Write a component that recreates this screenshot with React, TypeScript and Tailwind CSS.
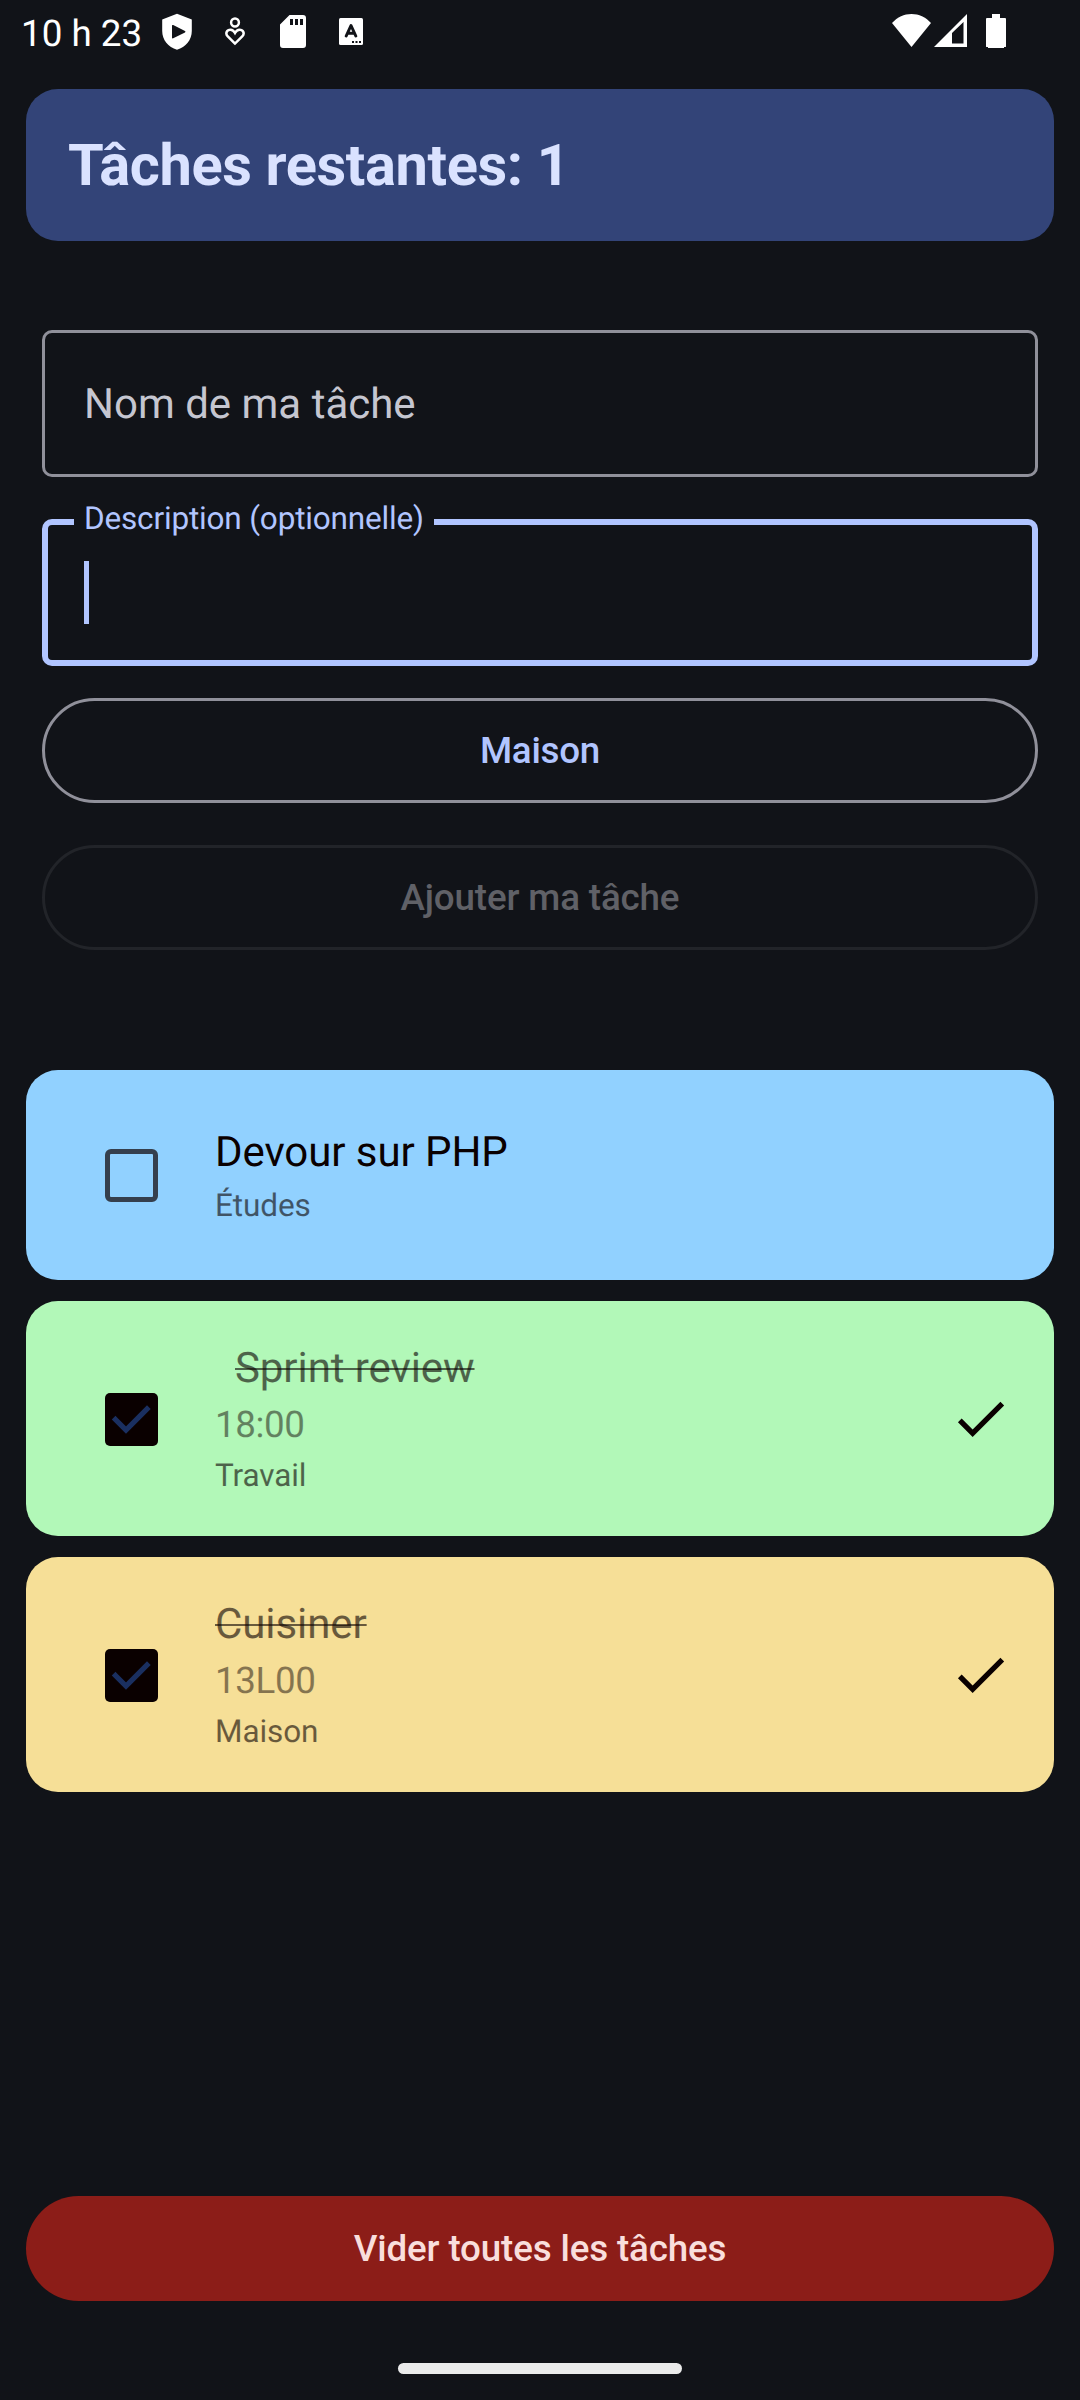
import React from "react";

type Task = {
  title: string;
  time?: string;
  category: string;
  done: boolean;
  indent?: boolean;
  tone: string;
};

const tasks: Task[] = [
  { title: "Devour sur PHP", category: "Études", done: false, tone: "h-[210px] pt-px bg-[#91d1ff]" },
  { title: "Sprint review", time: "18:00", category: "Travail", done: true, indent: true, tone: "h-[235px] pt-[2px] bg-[#b2f8b8]" },
  { title: "Cuisiner", time: "13L00", category: "Maison", done: true, tone: "h-[235px] pt-[2px] bg-[#f6df97]" },
];

function StatusBar() {
  return (
    <header className="flex h-[89px] items-start text-white">
      <span className="ml-[21px] mt-[11px] w-[122px] whitespace-nowrap text-[36.750px] leading-[46px]">10 h 23</span>
      {/* shield with play mark */}
      <svg className="ml-[19px] mt-[13px] h-[37px] w-[30px] shrink-0" viewBox="0 0 30 37" fill="currentColor">
        <path fillRule="evenodd" d="M15 .8 29.800 6.500V18c0 9-6 16-14.800 18.800C6.200 34 .2 27 .2 18V6.500ZM10 12.500v12q0 1.200 1.200.8L23 19.500q1-.8 0-1.600L11.200 12Q10 11.600 10 12.500Z" />
      </svg>
      {/* person with heart */}
      <svg className="ml-[33px] mt-[17px] h-[29px] w-[20px] shrink-0" viewBox="0 0 20 29" fill="none" stroke="currentColor" strokeWidth="2.500">
        <circle cx="10" cy="5.500" r="3.900" />
        <path d="M10 26.600 2.800 19.500C-.2 16.200 2 12.800 5.500 12.800c2 0 3.400 1.200 4.500 3.200 1.100-2 2.500-3.200 4.500-3.200 3.500 0 5.700 3.400 2.700 6.700Z" />
      </svg>
      {/* memory card */}
      <svg className="ml-[35px] mt-[15px] h-[33px] w-[26px] shrink-0" viewBox="0 0 26 33" fill="currentColor">
        <path fillRule="evenodd" d="M9.500 0H23a3 3 0 0 1 3 3v27a3 3 0 0 1-3 3H3a3 3 0 0 1-3-3V9.500ZM10 4v6h3V4ZM15 4v6h3V4ZM20 4v6h3V4Z" />
      </svg>
      {/* keyboard language */}
      <svg className="ml-[33px] mt-[18px] h-[27px] w-[24px] shrink-0" viewBox="0 0 24 27" fill="none">
        <rect width="24" height="27" rx="1.500" fill="white" />
        <path d="M7.200 18 12 7.500 16.800 18M8.500 15.300h7" stroke="#111318" strokeWidth="3" strokeLinecap="round" strokeLinejoin="round" />
        <path d="M13 23h2v2h-2zM16.500 23h2v2h-2zM20 23h2v2h-2z" fill="#111318" />
      </svg>
      {/* wifi */}
      <svg className="ml-auto mt-[14px] h-[33px] w-[39px] shrink-0" viewBox="0 0 39 33" fill="currentColor">
        <path d="M19.500 33 0 9C5.500 3 12 0 19.500 0S33.500 3 39 9Z" />
      </svg>
      {/* cellular */}
      <svg className="ml-[3px] mt-[14px] h-[33px] w-[33px] shrink-0" viewBox="0 0 33 33" fill="currentColor">
        <path fillRule="evenodd" d="M33 0v33H0ZM18 19v10.500h11.500V8Z" />
      </svg>
      {/* battery */}
      <svg className="ml-[19px] mr-[74px] mt-[14px] h-[34px] w-[20px] shrink-0" viewBox="0 0 20 34" fill="currentColor">
        <path d="M6 0h8v4h5q1 0 1 1v27.500q0 .5-1 .5h-1v1H2v-1H1q-1 0-1-.5V5q0-1 1-1h5Z" />
      </svg>
    </header>
  );
}

function Checkbox({ checked }: { checked: boolean }) {
  return checked ? (
    <svg className="h-[53px] w-[53px] shrink-0" viewBox="0 0 53 53" fill="none">
      <rect width="53" height="53" rx="5" fill="#0a0000" />
      <path d="M10.500 26.500 21 37 42 16" stroke="#1a2f60" strokeWidth="5.250" strokeLinecap="square" />
    </svg>
  ) : (
    <span className="h-[53px] w-[53px] shrink-0 rounded-[6px] border-5 border-[#353f4d]" />
  );
}

function TaskCard({ task }: { task: Task }) {
  return (
    <li className={`flex items-center rounded-[32px] pl-[79px] pr-[42px] ${task.tone}`}>
      <Checkbox checked={task.done} />
      <div className={`ml-[57px] flex-1 ${task.time ? "pb-[3px]" : ""}`}>
        <p className={`text-[42px] leading-[61px] tracking-[-0.08px] ${task.done ? "text-[#0a0000]/60" : "text-[#0a0000]"}`}>
          <span className={`${task.done ? "line-through decoration-2" : ""} ${task.indent ? "ml-[20px]" : ""}`}>{task.title}</span>
        </p>
        {task.time && <p className="mb-[2px] text-[36.750px] leading-[51px] tracking-[-0.4px] text-[#0a0000]/48">{task.time}</p>}
        <p className={`text-[31.500px] leading-[47px] tracking-[-0.1px] text-[#0a0000]/60 ${task.time ? "" : "-mt-px"}`}>{task.category}</p>
      </div>
      {task.done && (
        <svg className="-mt-[3px] h-[63px] w-[63px] shrink-0" viewBox="0 0 24 24" fill="#0a0000">
          <path d="M9 16.170 4.830 12l-1.420 1.410L9 19 21 7l-1.410-1.410z" />
        </svg>
      )}
    </li>
  );
}

export default function App() {
  return (
    <div className="flex h-[2400px] w-[1080px] flex-col overflow-hidden bg-[#111318] font-['Roboto',sans-serif] [text-rendering:geometricPrecision]">
      <StatusBar />
      <main className="flex flex-1 flex-col px-[26px]">
        <h1 className="flex h-[152px] items-center rounded-[32px] bg-[#334478] pl-[42px] pt-[2px] text-[57.750px] font-bold tracking-[-0.37px] text-[#dae2ff]">
          Tâches restantes: 1
        </h1>

        <form className="mt-[89px] flex flex-col px-[16px]">
          <div className="flex h-[147px] items-center rounded-[10px] border-3 border-[#90909a] pl-[39px] pt-[2px] text-[42px] text-[#c5c6d0]">
            Nom de ma tâche
          </div>
          <div className="relative mt-[42px] flex h-[147px] items-center rounded-[10px] border-6 border-[#b1c5ff] pl-[36px]">
            <label className="absolute left-[26px] top-[-24px] w-[360px] whitespace-nowrap bg-[#111318] pl-[10px] text-[31.500px] leading-[36px] tracking-[-0.17px] text-[#b1c5ff]">
              Description (optionnelle)
            </label>
            <span className="h-[63px] w-[5px] bg-[#b1c5ff]" />
          </div>
          <button type="button" className="mt-[32px] h-[105px] rounded-full border-3 border-[#90909a] text-[36.750px] font-medium tracking-[-0.25px] text-[#b1c5ff]">
            Maison
          </button>
          <button type="button" className="mt-[42px] h-[105px] rounded-full border-3 border-[#222429] text-[36.750px] font-medium tracking-[-0.15px] text-[#606167]">
            Ajouter ma tâche
          </button>
        </form>

        <ul className="mt-[120px] flex flex-col gap-[21px]">
          {tasks.map((task) => (
            <TaskCard key={task.title} task={task} />
          ))}
        </ul>

        <button type="button" className="mt-auto h-[105px] rounded-full bg-[#8c1d18] text-[36.750px] font-medium tracking-[-0.15px] text-[#f9dedc]">
          Vider toutes les tâches
        </button>
      </main>
      <footer className="flex h-[99px] justify-center pt-[62px]">
        <span className="h-[11px] w-[284px] rounded-full bg-[#ebebeb]" />
      </footer>
    </div>
  );
}
